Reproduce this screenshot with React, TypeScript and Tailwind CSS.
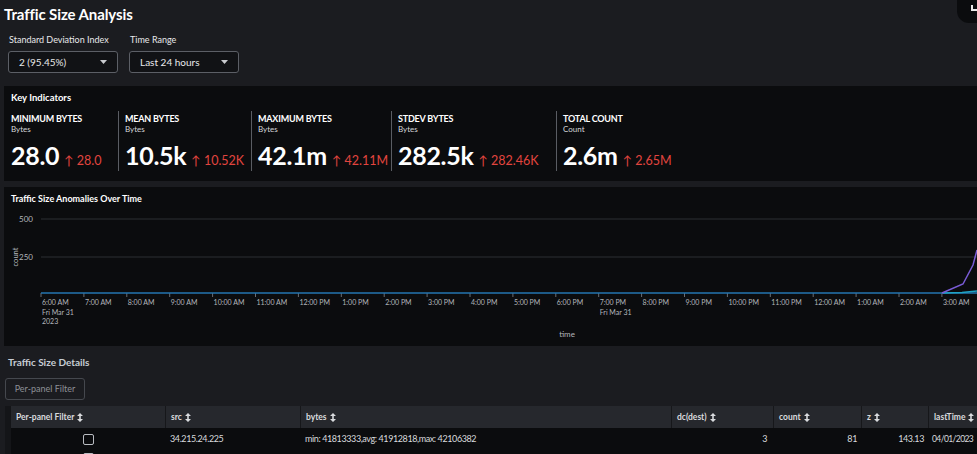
const metrics = [
  { title: "MINIMUM BYTES", unit: "Bytes", value: "28.0", delta: "28.0", w: "w-[107px]" },
  { title: "MEAN BYTES", unit: "Bytes", value: "10.5k", delta: "10.52K", w: "w-[133px]" },
  { title: "MAXIMUM BYTES", unit: "Bytes", value: "42.1m", delta: "42.11M", w: "w-[140px]" },
  { title: "STDEV BYTES", unit: "Bytes", value: "282.5k", delta: "282.46K", w: "w-[165px]" },
  { title: "TOTAL COUNT", unit: "Count", value: "2.6m", delta: "2.65M", w: "w-[140px]" },
];

const hours = [
  "6:00 AM", "7:00 AM", "8:00 AM", "9:00 AM", "10:00 AM", "11:00 AM", "12:00 PM",
  "1:00 PM", "2:00 PM", "3:00 PM", "4:00 PM", "5:00 PM", "6:00 PM", "7:00 PM",
  "8:00 PM", "9:00 PM", "10:00 PM", "11:00 PM", "12:00 AM", "1:00 AM", "2:00 AM", "3:00 AM",
];

const columns = [
  { label: "Per-panel Filter", w: "w-[154px]" },
  { label: "src", w: "w-[135px]" },
  { label: "bytes", w: "w-[371px]" },
  { label: "dc(dest)", w: "w-[102px]" },
  { label: "count", w: "w-[88px]" },
  { label: "z", w: "w-[67px]" },
  { label: "lastTime", w: "w-[60px]" },
];

function SortIcon() {
  return (
    <svg width="6" height="9" viewBox="0 0 6 9" className="shrink-0">
      <path d="M3 0L6 3H0z M3 9L0 6h6z" fill="#d9dbde" />
      <rect x="2.2" y="2" width="1.6" height="5" fill="#d9dbde" />
    </svg>
  );
}

function Select({ value, width }: { value: string; width: string }) {
  return (
    <div className={`${width} h-[22px] flex items-center justify-between rounded-[3px] border border-[#5c5f66] bg-[#111215] pl-[10px] pr-[10px] text-[10px] text-[#e8e9eb]`}>
      <span>{value}</span>
      <svg width="7" height="4" viewBox="0 0 7 4"><path d="M0 0h7L3.5 4z" fill="#c9cbcf" /></svg>
    </div>
  );
}

function Chart() {
  const x0 = 37;
  const step = 42.9;
  return (
    <svg width="973" height="137" className="block">
      <line x1={x0} x2={973} y1={10} y2={10} stroke="#2c2e33" />
      <line x1={x0} x2={973} y1={48} y2={48} stroke="#2c2e33" />
      <text x={29} y={13} textAnchor="end" fontSize="8" fill="#b3b6bb">500</text>
      <text x={29} y={51} textAnchor="end" fontSize="8" fill="#b3b6bb">250</text>
      <text x={0} y={0} transform="translate(14 48) rotate(-90)" textAnchor="middle" fontSize="7.5" fill="#b3b6bb">count</text>
      {hours.map((h, i) => {
        const x = x0 + i * step;
        return (
          <g key={h}>
            <line x1={x} x2={x} y1={84} y2={88} stroke="#6b6e74" />
            <text x={x + 1} y={96} fontSize="7" fill="#b3b6bb">{h}</text>
            {(i === 0 || i === 13) && (
              <text x={x + 1} y={105.5} fontSize="7" fill="#b3b6bb">Fri Mar 31</text>
            )}
            {i === 0 && <text x={x + 1} y={115} fontSize="7" fill="#b3b6bb">2023</text>}
          </g>
        );
      })}
      <line x1={x0} x2={973} y1={84} y2={84} stroke="#2475b0" strokeWidth="1.5" />
      <path d="M939 84 L958 83.5 L973 82" stroke="#1fa3c4" strokeWidth="1.5" fill="none" />
      <path d="M938 84 L959 75 L969 56 L973 41" stroke="#7a5cd6" strokeWidth="1.5" fill="none" />
      <text x={563} y={128} textAnchor="middle" fontSize="8" fill="#b3b6bb">time</text>
    </svg>
  );
}

export default function App() {
  return (
    <div className="relative w-[977px] h-[454px] overflow-hidden bg-[#1b1c20] font-['Lato','Liberation_Sans',sans-serif] text-white">
      <div className="absolute right-0 top-0 h-[23px] w-[20px] rounded-bl-[12px] bg-[#0b0c0e]">
        <div className="absolute left-[14px] top-[5px] h-[6px] w-[6px] border-l-2 border-b-2 border-[#e9e9e9]" />
      </div>

      <h1 className="pl-[4px] pt-[3px] h-[27px] text-[15px] font-bold leading-[22px] tracking-[-0.1px]">Traffic Size Analysis</h1>

      <div className="flex gap-[11px] pl-[8px] pt-[7px]">
        <div>
          <div className="pl-[1px] text-[9px] leading-[12px] text-[#e8e9eb]">Standard Deviation Index</div>
          <div className="mt-[5px]"><Select value="2 (95.45%)" width="w-[110px]" /></div>
        </div>
        <div>
          <div className="pl-[1px] text-[9px] leading-[12px] text-[#e8e9eb]">Time Range</div>
          <div className="mt-[5px]"><Select value="Last 24 hours" width="w-[110px]" /></div>
        </div>
      </div>

      <section className="ml-[4px] mt-[13px] h-[95px] bg-[#0b0c0e] pl-[7px]">
        <div className="pt-[6px] text-[9.5px] font-bold leading-[12px]">Key Indicators</div>
        <div className="mt-[7px] flex">
          {metrics.map((m, i) => (
            <div key={m.title} className={`${m.w} flex shrink-0`}>
              {i > 0 && <div className="mr-[6px] h-[60px] w-[1px] bg-[#5a5d63]" />}
              <div className="pt-[2px]">
                <div className="text-[9px] font-bold leading-[11px] tracking-[-0.2px]">{m.title}</div>
                <div className="text-[8px] leading-[11px] text-[#d5d7da]">{m.unit}</div>
                <div className="mt-[6px] flex items-baseline gap-[5px]">
                  <span className="text-[25px] font-bold leading-[28px] tracking-[-0.3px]">{m.value}</span>
                  <span className="text-[12.5px] text-[#e2453f]">↑ {m.delta}</span>
                </div>
              </div>
            </div>
          ))}
        </div>
      </section>

      <section className="ml-[4px] mt-[6px] h-[159px] bg-[#0b0c0e]">
        <div className="h-[22px] pl-[7px] pt-[6px] text-[9px] font-bold leading-[11px]">Traffic Size Anomalies Over Time</div>
        <Chart />
      </section>

      <div className="pl-[8px] pt-[10px] text-[10px] font-bold leading-[12px] text-[#c6ccd4]">Traffic Size Details</div>
      <div className="ml-[5px] mt-[10px] flex h-[22px] w-[80px] items-center justify-center rounded-[3px] border border-[#45484e] text-[9px] text-[#8d9096]">
        Per-panel Filter
      </div>

      <div className="ml-[5px] mt-[6px] flex">
        <div className="w-[6px] shrink-0 bg-[#141518]" />
        <div className="shrink-0">
          <div className="flex h-[22px] bg-[#26282d]">
            {columns.map((c, i) => (
              <div key={c.label} className={`${c.w} shrink-0 flex items-center gap-[3px] pl-[5px] text-[8.5px] font-bold text-[#d9dbde] ${i > 0 ? "border-l border-[#16171a]" : ""}`}>
                <span>{c.label}</span>
                <SortIcon />
              </div>
            ))}
          </div>
          <div className="flex h-[22px] items-center bg-[#0b0c0e] text-[9px] tracking-[-0.4px] text-[#d9dbde]">
            <div className="w-[154px] shrink-0 flex justify-center">
              <div className="h-[11px] w-[11px] rounded-[2px] border border-[#b9bcc1]" />
            </div>
            <div className="w-[135px] shrink-0 pl-[5px]">34.215.24.225</div>
            <div className="w-[371px] shrink-0 pl-[5px]">min: 41813333,avg: 41912818,max: 42106382</div>
            <div className="w-[102px] shrink-0 pr-[6px] text-right">3</div>
            <div className="w-[88px] shrink-0 pr-[4px] text-right">81</div>
            <div className="w-[67px] shrink-0 pr-[4px] text-right">143.13</div>
            <div className="w-[60px] shrink-0 pl-[4px] text-[8.5px] tracking-[-0.6px]">04/01/2023</div>
          </div>
          <div className="flex h-[10px] bg-[#0b0c0e]">
            <div className="w-[154px] shrink-0 flex justify-center pt-[3px]">
              <div className="h-[11px] w-[11px] rounded-[2px] border border-[#b9bcc1]" />
            </div>
          </div>
        </div>
      </div>
    </div>
  );
}
